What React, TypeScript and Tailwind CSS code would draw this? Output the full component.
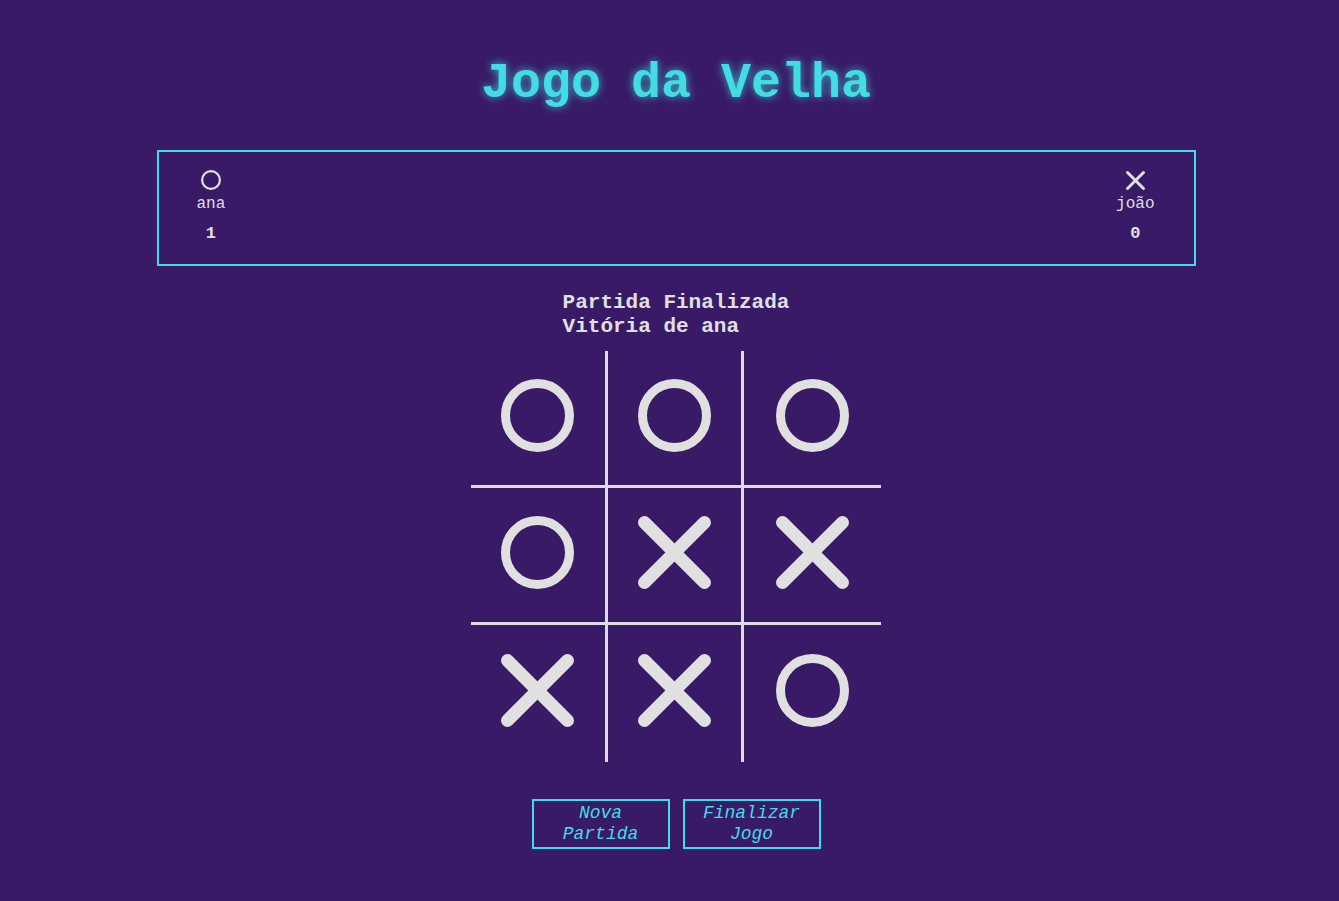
import type { ReactNode } from "react";

type Mark = "O" | "X";

const board: Mark[] = ["O", "O", "O", "O", "X", "X", "X", "X", "O"];

function CircleMark({ size, stroke }: { size: number; stroke: number }) {
	const r = (size - stroke) / 2;
	return (
		<svg width={size} height={size} viewBox={`0 0 ${size} ${size}`}>
			<circle cx={size / 2} cy={size / 2} r={r} fill="none" stroke="#e0e0e0" strokeWidth={stroke} />
		</svg>
	);
}

function CrossMark({ size, stroke }: { size: number; stroke: number }) {
	const p = stroke / 2 + 1;
	return (
		<svg width={size} height={size} viewBox={`0 0 ${size} ${size}`}>
			<g stroke="#e0e0e0" strokeWidth={stroke} strokeLinecap="round">
				<line x1={p} y1={p} x2={size - p} y2={size - p} />
				<line x1={size - p} y1={p} x2={p} y2={size - p} />
			</g>
		</svg>
	);
}

function Player({ icon, name, score }: { icon: ReactNode; name: string; score: number }) {
	return (
		<div className="flex flex-col items-center">
			<div className="flex h-[20px] items-center">{icon}</div>
			<p className="mt-[3px] text-[16px] leading-[22px] text-[#e0e0e0]">{name}</p>
			<p className="mt-[8px] text-[17px] font-bold leading-[22px] text-[#e0e0e0]">{score}</p>
		</div>
	);
}

export default function App() {
	return (
		<div
			className="flex min-h-[901px] flex-col items-center bg-[#381a67] pl-[13px] text-[#e0e0e0]"
			style={{ fontFamily: '"Liberation Mono", "Courier New", monospace' }}
		>
			<h1 className="mt-[56px] text-[50px] font-bold leading-[56px] text-[#41dde2] [text-shadow:0_0_8px_rgba(65,221,226,0.8)]">
				Jogo da Velha
			</h1>

			<section className="mt-[38px] flex w-[1039px] items-start justify-between border-2 border-[#41dde2] pl-[38px] pr-[39px] pt-[18px] pb-[19px]">
				<Player icon={<CircleMark size={20} stroke={2.2} />} name="ana" score={1} />
				<Player icon={<CrossMark size={21} stroke={3} />} name="joão" score={0} />
			</section>

			<div className="mt-[25px] text-[21px] font-bold leading-[24px] text-[#e0e0e0]">
				<p>Partida Finalizada</p>
				<p>Vitória de ana</p>
			</div>

			<div className="mt-[12px] grid w-[410px] grid-cols-3 grid-rows-3">
				{board.map((mark, i) => {
					const col = i % 3;
					const row = Math.floor(i / 3);
					return (
						<div
							key={i}
							className={`flex h-[137px] items-center justify-center border-[#e0dce6] pb-[6px] ${
								col < 2 ? "border-r-[3px]" : ""
							} ${row < 2 ? "border-b-[3px]" : ""}`}
						>
							{mark === "O" ? <CircleMark size={73} stroke={9} /> : <CrossMark size={75} stroke={13} />}
						</div>
					);
				})}
			</div>

			<div className="mt-[37px] flex gap-[13px]">
				<button className="h-[50px] w-[138px] border-2 border-[#41dde2] text-[18px] italic leading-[21px] text-[#41dde2]">
					Nova
					<br />
					Partida
				</button>
				<button className="h-[50px] w-[138px] border-2 border-[#41dde2] text-[18px] italic leading-[21px] text-[#41dde2]">
					Finalizar
					<br />
					Jogo
				</button>
			</div>
		</div>
	);
}
